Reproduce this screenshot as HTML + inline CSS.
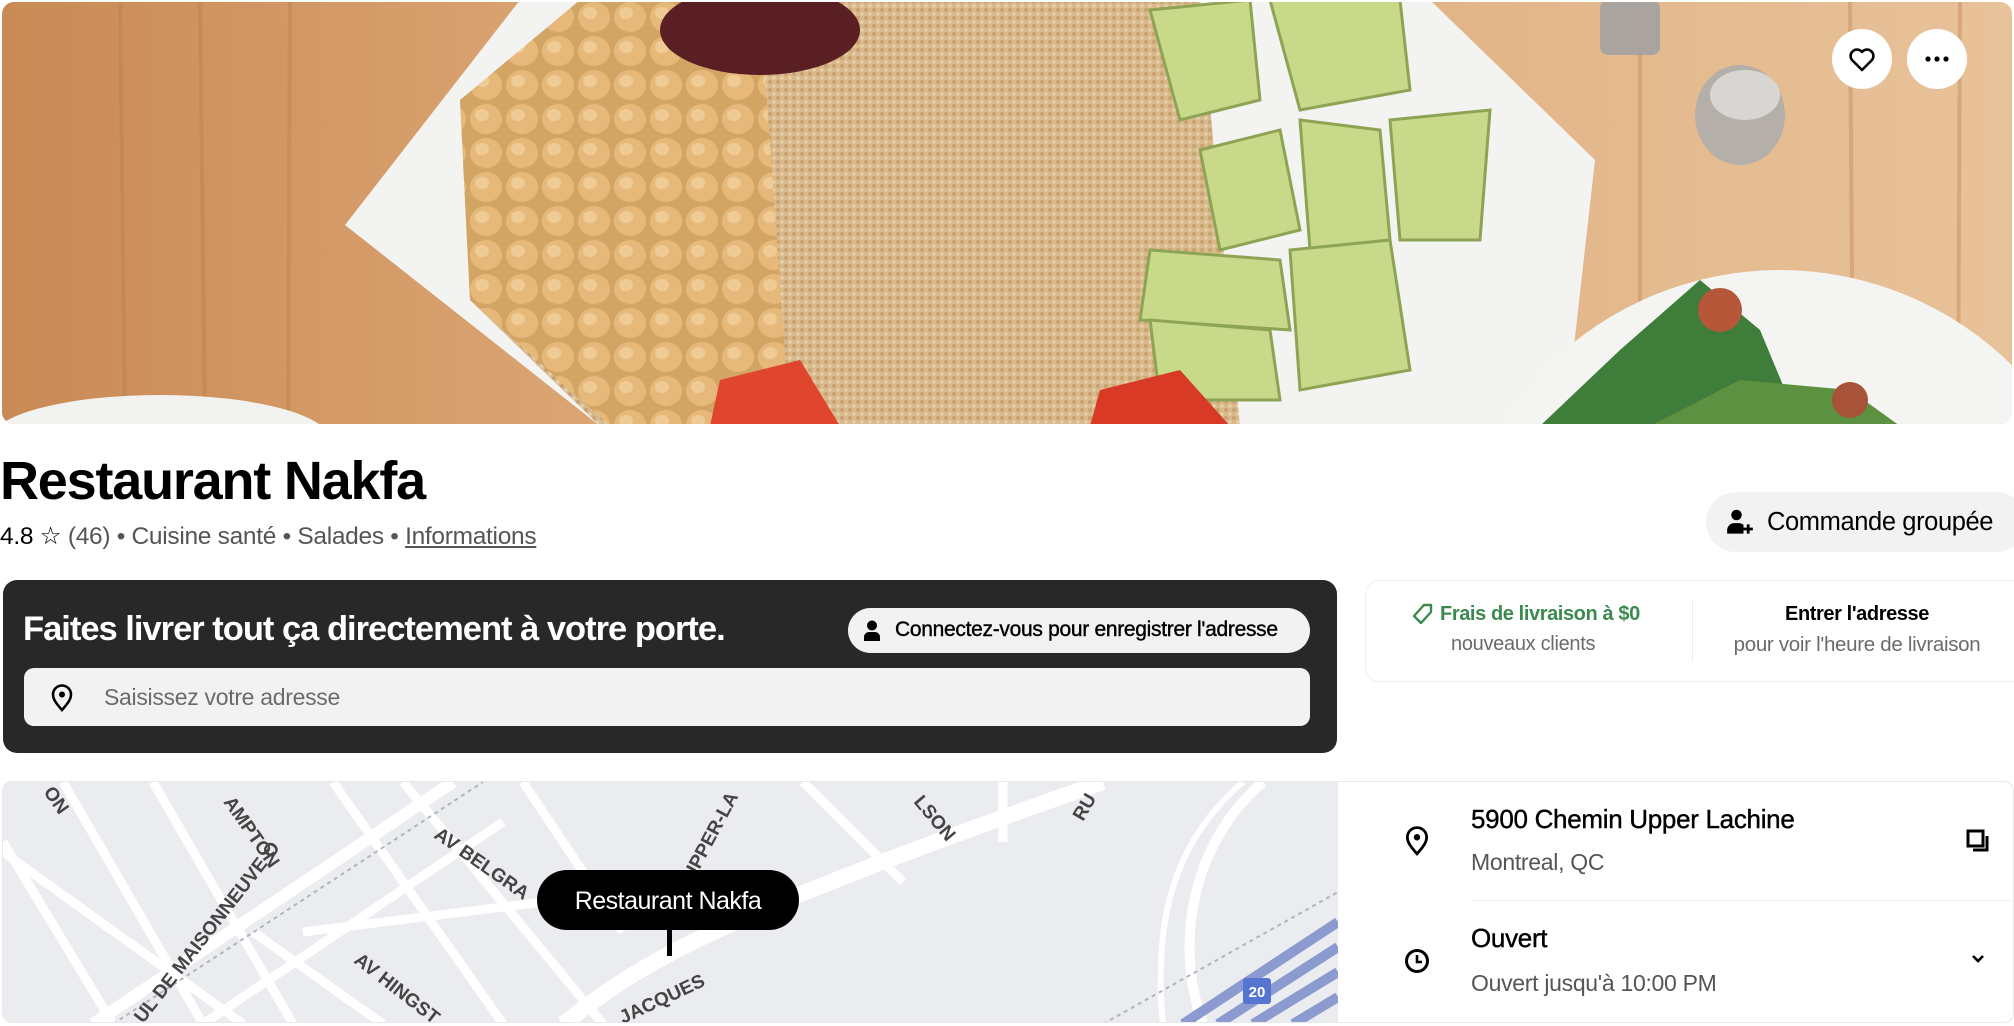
<!DOCTYPE html>
<html><head><meta charset="utf-8"><style>
*{margin:0;padding:0;box-sizing:border-box}
body{width:2014px;height:1026px;background:#fff;font-family:"Liberation Sans",sans-serif;color:#000;position:relative;overflow:hidden}
.abs{position:absolute}
.title{left:0;top:450px;font-size:54px;font-weight:bold;letter-spacing:-1.2px}
.meta{left:0;top:521px;font-size:24.5px;color:#555;letter-spacing:-0.3px}
.meta b{color:#000;font-weight:normal}
.meta u{color:#555}
.pill{border-radius:30px;background:#f2f2f2}
</style></head><body>
<svg class="abs" style="left:0;top:0" width="2014" height="426" viewBox="0 0 2014 426">
<defs>
<clipPath id="c"><rect x="2" y="2" width="2010" height="422" rx="12"/></clipPath>
<linearGradient id="w" x1="0" x2="1"><stop offset="0" stop-color="#c98a55"/><stop offset=".3" stop-color="#dba674"/><stop offset=".7" stop-color="#e2b487"/><stop offset="1" stop-color="#e8c29a"/></linearGradient>
<pattern id="q" width="8" height="8" patternUnits="userSpaceOnUse"><rect width="8" height="8" fill="#d8b98c"/><circle cx="2" cy="2" r="2" fill="#c9a270"/><circle cx="6" cy="6" r="1.6" fill="#ead3ad"/></pattern>
<pattern id="ch" width="36" height="34" patternUnits="userSpaceOnUse"><rect width="36" height="34" fill="#d3a564"/><ellipse cx="18" cy="17" rx="16" ry="15" fill="#e6b97a"/><ellipse cx="14" cy="13" rx="7" ry="6" fill="#efcc95"/></pattern>
</defs>
<g clip-path="url(#c)">
<rect width="2014" height="426" fill="url(#w)"/>
<g stroke="#b97a45" stroke-opacity=".35" stroke-width="4"><line x1="120" y1="0" x2="125" y2="426"/><line x1="200" y1="0" x2="205" y2="426"/><line x1="290" y1="0" x2="288" y2="426"/><line x1="1640" y1="0" x2="1640" y2="426"/><line x1="1850" y1="0" x2="1853" y2="426"/><line x1="1960" y1="0" x2="1958" y2="426"/></g>
<polygon points="520,0 1430,0 1595,160 1565,426 600,426 345,225" fill="#f3f3f1"/>
<polygon points="600,0 1200,0 1240,426 600,426 470,300 460,100" fill="url(#q)"/>
<polygon points="580,0 760,0 790,426 610,426 470,300 460,100" fill="url(#ch)"/>
<ellipse cx="760" cy="30" rx="100" ry="45" fill="#5a1f22"/>
<g fill="#c8d98a" stroke="#8ea455" stroke-width="3">
<polygon points="1150,10 1250,0 1260,100 1180,120"/><polygon points="1270,0 1400,0 1410,90 1300,110"/>
<polygon points="1200,150 1280,130 1300,230 1220,250"/><polygon points="1300,120 1380,130 1390,240 1310,250"/>
<polygon points="1390,120 1490,110 1480,240 1400,240"/><polygon points="1150,250 1280,260 1290,330 1140,320"/>
<polygon points="1290,250 1390,240 1410,370 1300,390"/><polygon points="1150,320 1270,330 1280,400 1160,400"/>
</g>
<polygon points="720,380 800,360 840,426 710,426" fill="#e0452e"/>
<polygon points="1100,390 1180,370 1230,426 1090,426" fill="#d93a26"/>
<circle cx="1780" cy="600" r="330" fill="#f4f4f2"/>
<polygon points="1540,426 1620,350 1700,280 1760,330 1800,426" fill="#3f7d3a"/>
<polygon points="1650,426 1740,380 1850,390 1900,426" fill="#5b9140"/>
<circle cx="1720" cy="310" r="22" fill="#b7573a"/><circle cx="1850" cy="400" r="18" fill="#a8523a"/>
<ellipse cx="160" cy="440" rx="170" ry="45" fill="#f2f2f0"/>
<rect x="1600" y="0" width="60" height="55" rx="8" fill="#aaa4a0"/>
<ellipse cx="1740" cy="115" rx="45" ry="50" fill="#b5afaa"/><ellipse cx="1745" cy="95" rx="35" ry="25" fill="#d8d6d3"/>
</g>
<circle cx="1862" cy="59" r="30" fill="#fff"/>
<path d="M1862 70 l-10 -10 a6 6 0 0 1 10 -8 a6 6 0 0 1 10 8 z" fill="none" stroke="#000" stroke-width="2.6" stroke-linejoin="round"/>
<circle cx="1937" cy="59" r="30" fill="#fff"/>
<circle cx="1928" cy="59" r="2.6"/><circle cx="1937" cy="59" r="2.6"/><circle cx="1946" cy="59" r="2.6"/>
</svg>

<div class="abs title">Restaurant Nakfa</div>
<div class="abs meta"><b>4.8 ☆</b> (46) • Cuisine santé • Salades • <u>Informations</u></div>

<div class="abs pill" style="left:1706px;top:492px;width:320px;height:60px"></div>
<svg class="abs" style="left:1726px;top:508px" width="28" height="28" viewBox="0 0 24 24"><circle cx="9" cy="6" r="4.5"/><path d="M1 22v-3a6 6 0 0 1 6-6h4a6 6 0 0 1 4 1.5V22z"/><path d="M19 14v8M15 18h8" stroke="#000" stroke-width="2.4"/></svg>
<div class="abs" style="left:1767px;top:508px;font-size:25.5px;letter-spacing:-0.4px">Commande groupée</div>

<div class="abs" style="left:3px;top:580px;width:1334px;height:173px;background:#282828;border-radius:14px"></div>
<div class="abs" style="left:23px;top:610px;font-size:34.5px;font-weight:bold;color:#fff;letter-spacing:-1px">Faites livrer tout ça directement à votre porte.</div>
<div class="abs pill" style="left:848px;top:608px;width:462px;height:45px;background:#f2f2f2"></div>
<svg class="abs" style="left:862px;top:620px" width="20" height="22" viewBox="0 0 20 22"><circle cx="10" cy="5.5" r="5"/><path d="M2 21v-4a5 5 0 0 1 5-5h6a5 5 0 0 1 5 5v4z"/></svg>
<div class="abs" style="left:895px;top:618px;font-size:21px;letter-spacing:-0.3px;-webkit-text-stroke:0.4px #000">Connectez-vous pour enregistrer l'adresse</div>
<div class="abs" style="left:24px;top:668px;width:1286px;height:58px;background:#f2f2f2;border-radius:10px"></div>
<svg class="abs" style="left:50px;top:684px" width="24" height="28" viewBox="0 0 24 28"><path d="M12 26 C4 17 3 14 3 10.5 a9 9 0 0 1 18 0 C21 14 20 17 12 26z" fill="none" stroke="#000" stroke-width="2.6"/><circle cx="12" cy="10.5" r="3"/></svg>
<div class="abs" style="left:104px;top:684px;font-size:23px;color:#6b6b6b;letter-spacing:-0.3px">Saisissez votre adresse</div>

<div class="abs" style="left:1365px;top:580px;width:660px;height:102px;border:1px solid #eee;border-radius:14px"></div>
<div class="abs" style="left:1692px;top:600px;width:1px;height:62px;background:#eee"></div>
<svg class="abs" style="left:1413px;top:603px" width="20" height="22" viewBox="0 0 20 22"><path d="M11 2h7v7L8 20 1 13z" fill="none" stroke="#3a8a4f" stroke-width="2.4" stroke-linejoin="round"/></svg>
<div class="abs" style="left:1440px;top:603px;font-size:20px;font-weight:bold;color:#3a8a4f;letter-spacing:-0.4px">Frais de livraison à $0</div>
<div class="abs" style="left:1451px;top:633px;font-size:20px;color:#6b6b6b;letter-spacing:-0.3px">nouveaux clients</div>
<div class="abs" style="left:1692px;top:603px;width:330px;text-align:center;font-size:20px;font-weight:bold;letter-spacing:-0.4px">Entrer l'adresse</div>
<div class="abs" style="left:1692px;top:633px;width:330px;text-align:center;font-size:20.5px;color:#6b6b6b;letter-spacing:-0.3px">pour voir l'heure de livraison</div>

<div class="abs" style="left:2px;top:781px;width:2012px;height:242px;border:1px solid #e8e8e8;border-radius:10px;overflow:hidden">
<svg class="abs" style="left:0;top:0" width="1335" height="242" viewBox="0 0 1335 242" font-family="Liberation Sans" font-weight="bold" font-size="19" fill="#444">
<rect width="1335" height="242" fill="#ebecef"/>
<g stroke="#fff" stroke-width="9" fill="none">
<line x1="150" y1="0" x2="290" y2="242"/><line x1="60" y1="0" x2="200" y2="242"/><line x1="0" y1="60" x2="110" y2="242"/>
<line x1="330" y1="0" x2="500" y2="242"/><line x1="400" y1="0" x2="600" y2="242"/><line x1="520" y1="0" x2="620" y2="150"/>
<line x1="800" y1="0" x2="900" y2="100"/><line x1="1000" y1="0" x2="1000" y2="60"/>
<line x1="0" y1="70" x2="240" y2="242"/><line x1="250" y1="150" x2="380" y2="242"/>
<line x1="90" y1="242" x2="450" y2="0" stroke-width="12"/><line x1="200" y1="242" x2="500" y2="40"/>
<path d="M560 242 C640 180 700 140 1100 0" stroke-width="16"/>
<path d="M1200 242 C1170 160 1190 60 1260 0" stroke-width="10"/><path d="M1160 242 C1150 140 1170 60 1240 0" stroke-width="6"/>
<line x1="300" y1="150" x2="700" y2="100"/>
</g>
<g stroke="#b0b4bc" stroke-width="2" stroke-dasharray="4 4"><line x1="110" y1="242" x2="480" y2="0"/><line x1="1100" y1="242" x2="1335" y2="110"/></g>
<g stroke="#8b9bd0" stroke-width="10"><line x1="1180" y1="242" x2="1335" y2="140"/><line x1="1215" y1="242" x2="1335" y2="165"/><line x1="1250" y1="242" x2="1335" y2="190"/><line x1="1290" y1="242" x2="1335" y2="215"/></g>
<rect x="1240" y="196" width="28" height="26" rx="3" fill="#5575d0"/><text x="1254" y="215" font-size="15" fill="#fff" text-anchor="middle">20</text>
<text transform="translate(40,10) rotate(55)">ON</text>
<text transform="translate(220,20) rotate(55)">AMPTON</text>
<text transform="translate(430,55) rotate(35)">AV BELGRA</text>
<text transform="translate(140,242) rotate(-52)">UL DE MAISONNEUVE O</text>
<text transform="translate(350,180) rotate(38)">AV HINGST</text>
<text transform="translate(690,100) rotate(-62)">UPPER-LA</text>
<text transform="translate(910,20) rotate(50)">LSON</text>
<text transform="translate(1080,40) rotate(-60)">RU</text>
<text transform="translate(620,242) rotate(-25)">JACQUES</text>
<rect x="534" y="88" width="262" height="60" rx="30" fill="#000"/>
<text x="665" y="127" font-size="25" fill="#fff" text-anchor="middle" font-weight="normal" letter-spacing="-0.5">Restaurant Nakfa</text>
<rect x="664" y="148" width="5" height="26" fill="#000"/>
</svg>
</div>

<svg class="abs" style="left:1404px;top:826px" width="26" height="30" viewBox="0 0 24 28"><path d="M12 26 C4 17 3 14 3 10.5 a9 9 0 0 1 18 0 C21 14 20 17 12 26z" fill="none" stroke="#000" stroke-width="2.6"/><circle cx="12" cy="10.5" r="3"/></svg>
<div class="abs" style="left:1471px;top:804px;font-size:26px;letter-spacing:-0.3px;-webkit-text-stroke:0.4px #000">5900 Chemin Upper Lachine</div>
<div class="abs" style="left:1471px;top:849px;font-size:23px;color:#555;letter-spacing:-0.3px">Montreal, QC</div>
<svg class="abs" style="left:1966px;top:829px" width="24" height="24" viewBox="0 0 24 24"><path d="M2 2h15v15H2z" fill="none" stroke="#000" stroke-width="3"/><path d="M21 7v14H7" fill="none" stroke="#000" stroke-width="3"/></svg>
<div class="abs" style="left:1471px;top:900px;width:543px;height:1px;background:#eee"></div>
<svg class="abs" style="left:1404px;top:948px" width="26" height="26" viewBox="0 0 26 26"><circle cx="13" cy="13" r="10.5" fill="none" stroke="#000" stroke-width="3"/><path d="M13 7v7h5" fill="none" stroke="#000" stroke-width="2.6"/></svg>
<div class="abs" style="left:1471px;top:923px;font-size:26px;letter-spacing:-0.3px;-webkit-text-stroke:0.4px #000">Ouvert</div>
<div class="abs" style="left:1471px;top:970px;font-size:23px;color:#555;letter-spacing:-0.3px">Ouvert jusqu'à 10:00 PM</div>
<svg class="abs" style="left:1970px;top:953px" width="16" height="12" viewBox="0 0 16 12"><path d="M3 3l5 5 5-5" fill="none" stroke="#000" stroke-width="2.6"/></svg>
</body></html>
